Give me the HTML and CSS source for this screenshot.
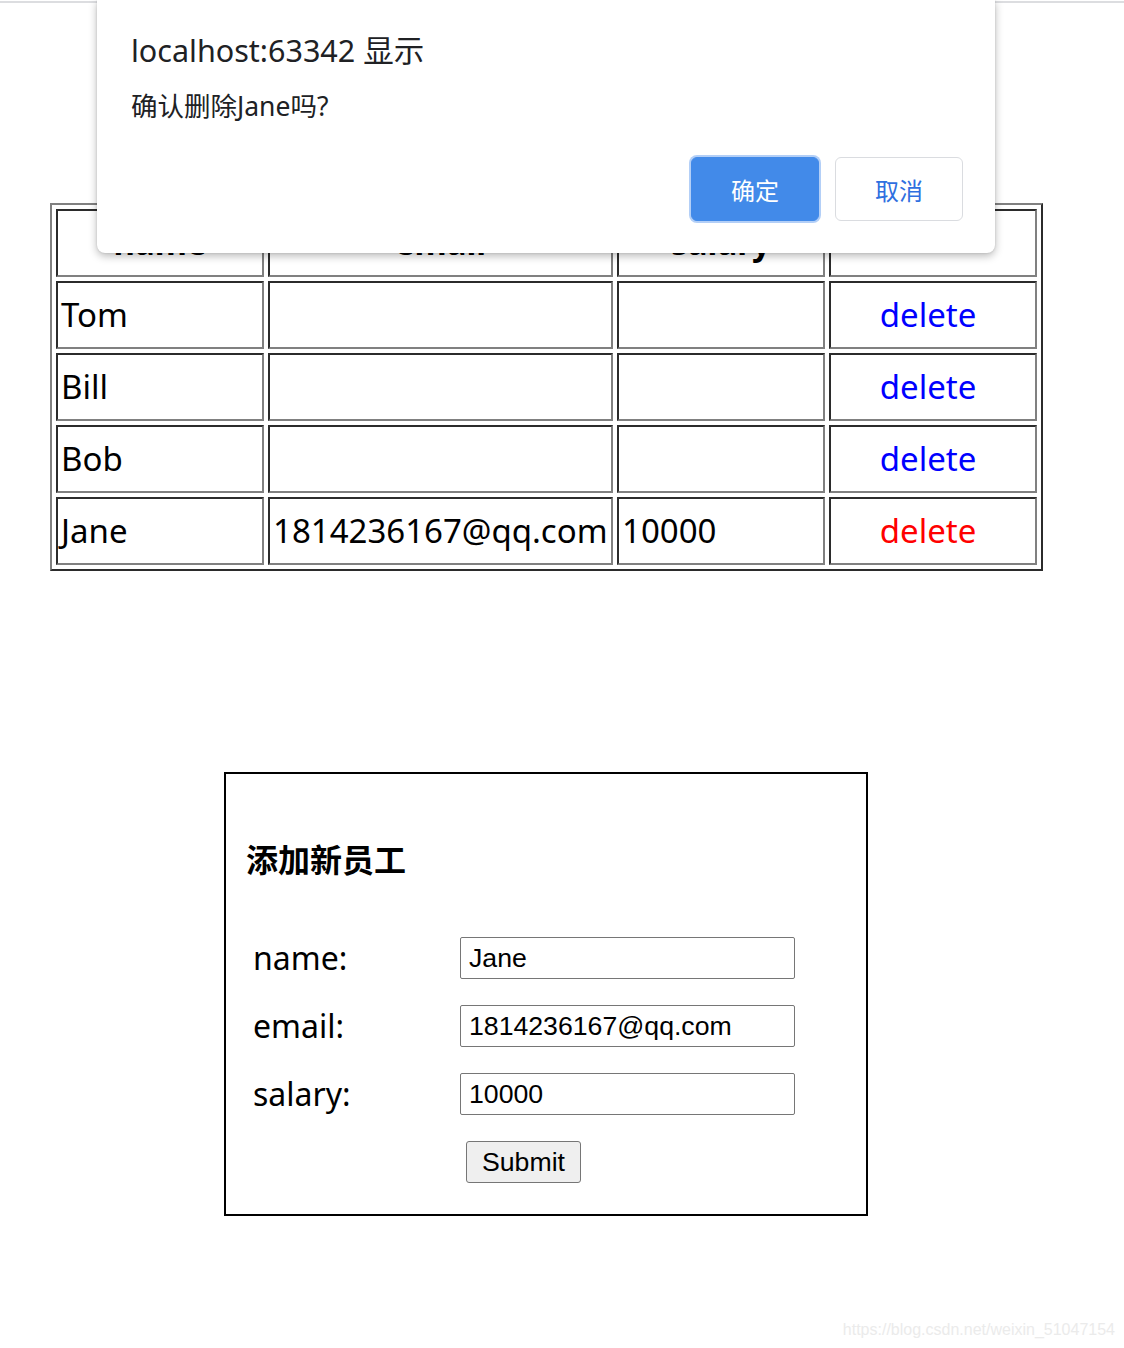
FILE: index.html
```html
<!DOCTYPE html>
<html lang="zh-CN">
<head>
    <meta charset="UTF-8">
    <meta name="viewport" content="width=device-width, initial-scale=1.0">
    <title>员工列表</title>
    <link rel="stylesheet" href="styles.css">
</head>
<body>
    <div class="browser-edge"></div>

    <table class="emp-table">
        <tr>
            <th class="col-name">name</th>
            <th class="col-email">email</th>
            <th class="col-salary">salary</th>
            <th class="col-action"></th>
        </tr>
        <tr>
            <td>Tom</td>
            <td></td>
            <td></td>
            <td class="action"><a href="#">delete</a></td>
        </tr>
        <tr>
            <td>Bill</td>
            <td></td>
            <td></td>
            <td class="action"><a href="#">delete</a></td>
        </tr>
        <tr>
            <td>Bob</td>
            <td></td>
            <td></td>
            <td class="action"><a href="#">delete</a></td>
        </tr>
        <tr>
            <td>Jane</td>
            <td>1814236167@qq.com</td>
            <td>10000</td>
            <td class="action"><a href="#" class="hovered">delete</a></td>
        </tr>
    </table>

    <div class="form-box">
        <h4>添加新员工</h4>
        <form class="add-form">
            <label for="name">name:</label>
            <input type="text" id="name" value="Jane">
            <label for="email">email:</label>
            <input type="text" id="email" value="1814236167@qq.com">
            <label for="salary">salary:</label>
            <input type="text" id="salary" value="10000">
            <span></span>
            <button type="button" class="submit">Submit</button>
        </form>
    </div>

    <div class="watermark">https://blog.csdn.net/weixin_51047154</div>

    <!-- window.confirm() -->
    <div class="dialog">
        <div class="dialog-title">localhost:63342 显示</div>
        <div class="dialog-msg">确认删除Jane吗?</div>
        <div class="dialog-buttons">
            <button type="button" class="btn-ok">确定</button>
            <button type="button" class="btn-cancel">取消</button>
        </div>
    </div>
</body>
</html>
```

FILE: styles.css
```css
* {
    box-sizing: border-box;
}

body {
    margin: 0;
    position: relative;
    height: 1348px;
    background: white;
    color: #000;
    font-family: 'Noto Sans', 'Noto Sans CJK SC', sans-serif;
    font-size: 32px;
    overflow: hidden;
}

.browser-edge {
    margin-top: 1px;
    height: 2px;
    background-color: #dcdde0;
}

.emp-table {
    margin: 200px 0 0 50px;
    border-collapse: separate;
    border-spacing: 4px;
    border: 2px solid;
    border-color: #808080 #2b2b2b #2b2b2b #808080;
    font-size: 33px;
}

.emp-table th,
.emp-table td {
    border: 2px solid;
    border-color: #2b2b2b #808080 #808080 #2b2b2b;
    padding: 10px 3px;
    line-height: 44px;
    height: 68px;
    text-align: left;
    white-space: nowrap;
}

.emp-table th {
    text-align: center;
    font-weight: bold;
}

.col-name,
.col-salary,
.col-action {
    width: 208px;
}

.col-email {
    width: 345px;
}

.emp-table td.action {
    text-align: center;
    padding-right: 13px;
}

.emp-table a {
    color: #0000ff;
    text-decoration: none;
}

.emp-table a.hovered {
    color: #ff0000;
}

.form-box {
    width: 644px;
    margin: 201px 0 0 224px;
    border: 2px solid #000;
    padding: 64px 20px 31px 27px;
}

.form-box h4 {
    margin: 0 0 55px -7px;
    font-size: 32px;
    line-height: 44px;
    font-weight: bold;
}

.add-form {
    display: grid;
    grid-template-columns: 207px 335px;
    row-gap: 26px;
    align-items: center;
}

.add-form label {
    line-height: 42px;
}

.add-form input {
    width: 335px;
    height: 42px;
    border: 1px solid #767676;
    border-radius: 2px;
    padding: 0 8px;
    font-family: 'Liberation Sans', Arial, sans-serif;
    font-size: 26.67px;
    color: #000;
}

.submit {
    justify-self: start;
    margin-left: 6px;
    width: 115px;
    height: 42px;
    background-color: #efefef;
    border: 1px solid #767676;
    border-radius: 3px;
    padding: 0;
    font-family: 'Liberation Sans', Arial, sans-serif;
    font-size: 26.67px;
    color: #000;
}

.watermark {
    position: absolute;
    right: 9px;
    top: 1321px;
    font-family: 'Liberation Sans', Arial, sans-serif;
    font-size: 16px;
    color: #ebebeb;
}

.dialog {
    position: absolute;
    top: 0;
    left: 97px;
    width: 898px;
    height: 253px;
    background: white;
    border-radius: 0 0 8px 8px;
    box-shadow: 0 3px 8px rgba(0,0,0,0.28), 0 0 2px rgba(0,0,0,0.15);
    padding: 30px 32px 0 34px;
    font-family: 'Noto Sans', 'Noto Sans CJK SC', sans-serif;
    color: #202124;
}

.dialog-title {
    font-size: 30.5px;
    line-height: 40px;
}

.dialog-msg {
    margin-top: 18px;
    font-size: 26.5px;
    line-height: 36px;
}

.dialog-buttons {
    display: flex;
    justify-content: flex-end;
    gap: 16px;
    margin-top: 33px;
}

.dialog-buttons button {
    width: 128px;
    height: 64px;
    border-radius: 6px;
    font-family: 'Noto Sans CJK SC', sans-serif;
    font-size: 24px;
    cursor: pointer;
}

.btn-ok {
    background-color: #428ae9;
    border: 1px solid #428ae9;
    color: white;
    box-shadow: 0 0 0 2px #b3cff7;
}

.btn-cancel {
    background: white;
    border: 1px solid #dadce0;
    color: #2f6fe0;
}
```
